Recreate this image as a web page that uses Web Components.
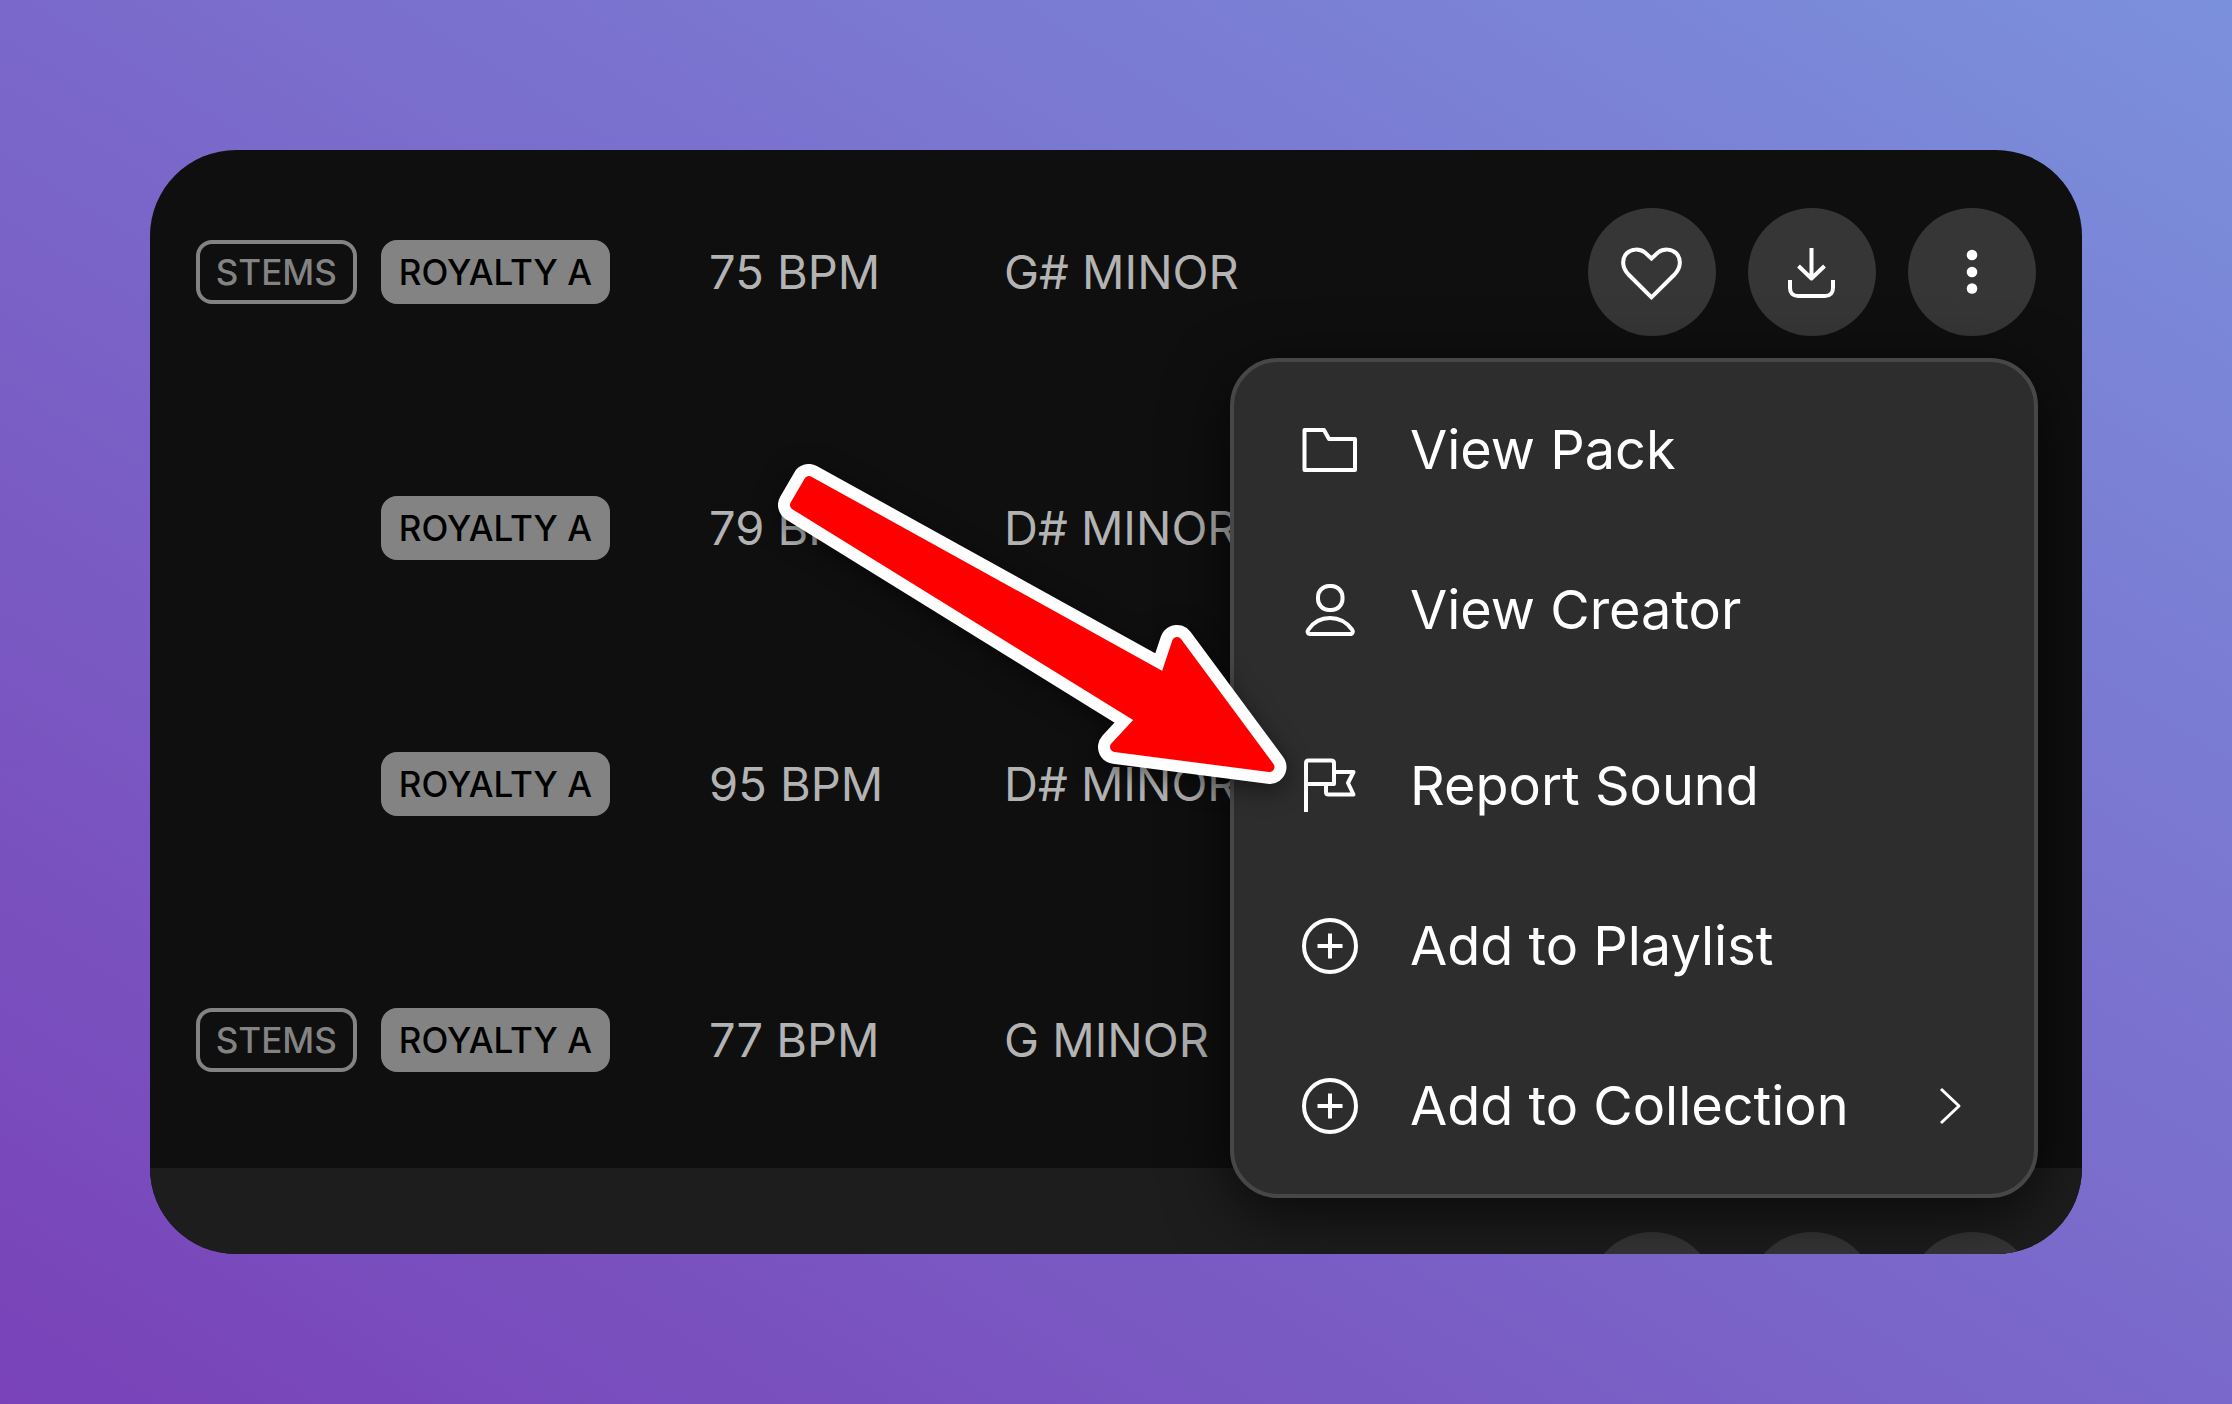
<!DOCTYPE html>
<html lang="en">
<head>
<meta charset="utf-8">
<title>Sounds</title>
<style>
  html, body { margin: 0; min-height: 100%; }
  body {
    min-height: 100vh;
    box-sizing: border-box;
    padding: 150px;
    display: flex;
    background: linear-gradient(to top right, #7942b8, #7b90dc);
    font-family: Inter, "Liberation Sans", sans-serif;
  }
  sound-panel { flex: 1; }
</style>
</head>
<body>
<sound-panel>
  <sound-row bpm="75" key-name="G# MINOR" stems open></sound-row>
  <sound-row bpm="79" key-name="D# MINOR"></sound-row>
  <sound-row bpm="95" key-name="D# MINOR"></sound-row>
  <sound-row bpm="77" key-name="G MINOR" stems></sound-row>
  <player-bar slot="footer"></player-bar>
  <pointer-arrow slot="overlay"></pointer-arrow>
</sound-panel>

<script>
const svg = (name, body, size = 64) =>
  `<svg class="${name}" viewBox="0 0 ${size} ${size}" width="${size}" height="${size}" fill="none" stroke="currentColor" stroke-width="4" stroke-linejoin="round" aria-hidden="true">${body}</svg>`;

const ICONS = {
  heart: '<path d="M31.500 57.300L8.500 34.500C1.500 27 2 18.500 6.500 13.500C11.500 8.500 19.500 8.500 25 12.500L31.500 18.500L38 12.500C43.500 8.500 51.500 8.500 56.500 13.500C61 18.500 61.500 27 54.500 34.500Z" stroke-linejoin="miter"/>',
  download: '<path d="M31.500 8V38M18.500 26L31.500 38.500L44.500 26"/><path d="M10 40V48C10 53 13 56 18 56H45C50 56 53 53 53 48V40"/>',
  more: '<g fill="currentColor" stroke="none"><circle cx="32" cy="15" r="5.300"/><circle cx="32" cy="32" r="5.300"/><circle cx="32" cy="48.500" r="5.300"/></g>',
  folder: '<path d="M6.500 12H26L31 21H57V52H6.500Z"/>',
  person: '<rect x="20" y="8" width="24.500" height="24" rx="11"/><path d="M12 56C9.500 56 9 53.500 10.500 51.500C15.500 44 22 40 32 40C42 40 48.500 44 54 51.500C55.500 53.500 54.500 56 52.500 56Z"/>',
  flag: '<path d="M8 58V9C8 7.500 9 6.500 10.500 6.500H33C35 6.500 36 7.500 36 9V30H8"/><path d="M36 18H55.500L50 29L55.500 40.500H30.500C29 40.500 28 39.500 28 38V31"/>',
  plus: '<circle cx="32" cy="32" r="26"/><path d="M32 19.500V44.500M19.500 32H44.500"/>',
  chevron: '<path d="M23 15L41 32L23 49" stroke-width="3"/>'
};

function define(tag, css, html) {
  customElements.define(tag, class extends HTMLElement {
    constructor() {
      super();
      this.attachShadow({ mode: 'open' });
    }
    connectedCallback() {
      this.shadowRoot.innerHTML = `<style>${css}</style>${html(this)}`;
    }
  });
}

define('sound-tag', `
  :host {
    display: inline-flex; align-items: center; justify-content: center;
    box-sizing: border-box; height: 64px; padding: 0 16px;
    border: 4px solid #838383; border-radius: 16px;
    color: #838383; font-size: 35px; line-height: 44px; font-weight: 500; white-space: nowrap;
  }
  :host([filled]) { padding: 0 14px; background: #838383; color: #000; }
`, () => '<slot></slot>');

define('round-button', `
  :host { display: block; }
  button {
    display: flex; align-items: center; justify-content: center;
    width: 128px; height: 128px; padding: 0; border: 0; border-radius: 50%;
    background: #363636; color: #fff; cursor: pointer;
  }
`, el => `<button type="button" aria-label="${el.getAttribute('label')}">${svg('icon', ICONS[el.getAttribute('icon')])}</button>`);

define('menu-item', `
  :host { display: block; }
  button {
    display: flex; align-items: center; gap: 48px; width: 100%; height: 160px;
    padding: 0 52px 0 64px; border: 0; background: none; color: #fff;
    font: inherit; font-size: 54px; line-height: 64px; font-weight: 400; text-align: left; cursor: pointer;
  }
  span { flex: 1; white-space: nowrap; }
`, el => `<button type="button" role="menuitem">${svg('icon', ICONS[el.getAttribute('icon')])}<span><slot></slot></span>${el.hasAttribute('submenu') ? svg('chevron', ICONS.chevron) : ''}</button>`);

define('context-menu', `
  :host {
    display: block; box-sizing: border-box; width: 808px; padding: 8px 0;
    border: 4px solid #474747; border-radius: 48px; background: #2d2d2d;
    box-shadow: 0 16px 64px rgba(0, 0, 0, .7);
  }
  .group + .group { margin-top: 16px; }
`, () => `
  <div role="menu">
    <div class="group">
      <menu-item icon="folder">View Pack</menu-item>
      <menu-item icon="person">View Creator</menu-item>
    </div>
    <div class="group">
      <menu-item icon="flag">Report Sound</menu-item>
      <menu-item icon="plus">Add to Playlist</menu-item>
      <menu-item icon="plus" submenu>Add to Collection</menu-item>
    </div>
  </div>`);

define('sound-actions', `
  :host { display: flex; gap: 32px; position: relative; }
  context-menu { position: absolute; top: calc(100% + 22px); right: -2px; z-index: 2; }
`, el => `
  <round-button icon="heart" label="Like"></round-button>
  <round-button icon="download" label="Download"></round-button>
  <round-button icon="more" label="More options"></round-button>
  ${el.hasAttribute('open') ? '<context-menu></context-menu>' : ''}`);

define('sound-row', `
  :host {
    display: grid; grid-template-columns: 414px 196px 1fr auto; column-gap: 99px; align-items: center;
    height: 256px; padding: 0 46px; color: #b3b3b3; font-size: 47px; line-height: 58px; white-space: nowrap;
  }
  .tags { display: flex; justify-content: flex-end; gap: 24px; }
`, el => `
  <div class="tags">${el.hasAttribute('stems') ? '<sound-tag>STEMS</sound-tag>' : ''}<sound-tag filled>ROYALTY A</sound-tag></div>
  <div>${el.getAttribute('bpm')} BPM</div>
  <div>${el.getAttribute('key-name')}</div>
  ${el.hasAttribute('open') ? '<sound-actions open></sound-actions>' : ''}`);

define('player-bar', `
  :host { display: flex; justify-content: flex-end; padding: 64px 46px; background: #1d1d1d; }
`, () => '<sound-actions></sound-actions>');

define('pointer-arrow', `
  :host { display: block; position: absolute; z-index: 3; top: 310px; left: 610px; pointer-events: none; }
  svg { display: block; overflow: visible; filter: drop-shadow(0 6px 12px rgba(0, 0, 0, .5)); }
`, () => `
  <svg width="540" height="340" viewBox="760 460 540 340" stroke-linejoin="round" aria-hidden="true">
    <defs><path id="a" d="M809 481L1165 678L1177 642L1269.500 767L1115 747L1141 719L795 505Z"/></defs>
    <use href="#a" fill="#fff" stroke="#fff" stroke-width="34"/>
    <use href="#a" fill="#f00" stroke="#f00" stroke-width="10"/>
  </svg>`);

/* The list is scrolled slightly, so its first row starts just above the visible edge. */
define('sound-panel', `
  :host { display: block; position: relative; border-radius: 86px; background: #0f0f0f; overflow: hidden; height: calc(100vh - 300px); }
  .list { margin-top: -6px; }
`, () => '<div class="list"><slot></slot><slot name="footer"></slot></div><slot name="overlay"></slot>');
</script>
</body>
</html>
